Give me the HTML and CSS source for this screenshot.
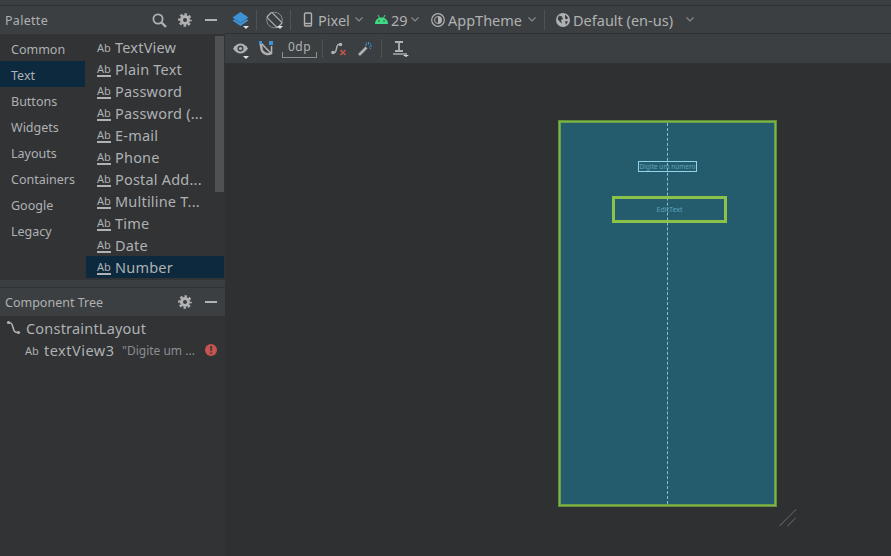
FILE: index.html
```html
<!DOCTYPE html>
<html lang="en">
<head>
    <meta charset="UTF-8">
    <title>Layout Editor</title>
    <link rel="stylesheet" href="styles.css">
</head>
<body>
    <div class="top-strip"></div>
    <div class="editor">
        <aside class="sidebar">
            <div class="panel-header">
                <span class="panel-title palette-title">Palette</span>
                <svg class="hdr-icon search" width="15" height="15" viewBox="0 0 15 15"><circle cx="6" cy="6" r="4.6" fill="none" stroke="#afb1b3" stroke-width="1.8"/><path d="M9.500 9.500l4.500 4.500" stroke="#afb1b3" stroke-width="2.400"/></svg>
                <svg class="hdr-icon" width="14" height="14" viewBox="0 0 14 14"><circle cx="7" cy="7" r="3.500" fill="none" stroke="#afb1b3" stroke-width="3"/><circle cx="7" cy="7" r="5.700" fill="none" stroke="#afb1b3" stroke-width="2.200" stroke-dasharray="2.500 1.980" stroke-dashoffset="1.250"/></svg>
                <span class="hdr-dash"></span>
            </div>
            <div class="palette">
                <ul class="categories">
                    <li>Common</li>
                    <li class="selected">Text</li>
                    <li>Buttons</li>
                    <li>Widgets</li>
                    <li>Layouts</li>
                    <li>Containers</li>
                    <li>Google</li>
                    <li>Legacy</li>
                </ul>
                <ul class="widgets">
                    <li><span class="ab">Ab</span>TextView</li>
                    <li><span class="ab line">Ab</span>Plain Text</li>
                    <li><span class="ab line">Ab</span>Password</li>
                    <li><span class="ab line">Ab</span>Password (...</li>
                    <li><span class="ab line">Ab</span>E-mail</li>
                    <li><span class="ab line">Ab</span>Phone</li>
                    <li><span class="ab line">Ab</span>Postal Add...</li>
                    <li><span class="ab line">Ab</span>Multiline T...</li>
                    <li><span class="ab line">Ab</span>Time</li>
                    <li><span class="ab line">Ab</span>Date</li>
                    <li class="selected"><span class="ab line">Ab</span>Number</li>
                </ul>
                <div class="scrollbar"></div>
            </div>
            <div class="panel-gap"></div>
            <div class="panel-header">
                <span class="panel-title">Component Tree</span>
                <svg class="hdr-icon" width="14" height="14" viewBox="0 0 14 14"><circle cx="7" cy="7" r="3.500" fill="none" stroke="#afb1b3" stroke-width="3"/><circle cx="7" cy="7" r="5.700" fill="none" stroke="#afb1b3" stroke-width="2.200" stroke-dasharray="2.500 1.980" stroke-dashoffset="1.250"/></svg>
                <span class="hdr-dash"></span>
            </div>
            <div class="tree">
                <div class="tree-root">
                    <svg width="15" height="15" viewBox="0 0 15 15"><path d="M2.500 2.500c4 0 3.500 2 4.500 5s1 5 5 5" fill="none" stroke="#afb1b3" stroke-width="1.600"/><circle cx="2.500" cy="2.500" r="1.600" fill="#afb1b3"/><circle cx="12.500" cy="12.500" r="1.600" fill="#afb1b3"/></svg>
                    ConstraintLayout
                </div>
                <div class="tree-child">
                    <span class="ab">Ab</span><span class="tree-name">textView3</span>
                    <span class="tree-hint">"Digite um ...</span>
                    <span class="error-dot">!</span>
                </div>
            </div>
        </aside>
        <main class="main">
            <div class="toolbar">
                <svg class="tool" width="17" height="18" viewBox="0 0 17 18"><path d="M8.500 1L16.500 6.500 8.500 12 .5 6.500z" fill="#3d92d6"/><path d="M.5 9.500l2-1.300 6 4 6-4 2 1.300-8 5.500z" fill="#3d92d6"/></svg>
                <span class="caret"></span>
                <span class="sep"></span>
                <svg class="tool" width="17" height="18" viewBox="0 0 17 18"><circle cx="8.500" cy="9" r="7.800" fill="none" stroke="#87898b" stroke-width="1"/><rect x="5" y="1.500" width="7" height="15" rx="1" transform="rotate(-45 8.500 9)" fill="#3c3f41" stroke="#afb1b3" stroke-width="1.200"/></svg>
                <span class="caret"></span>
                <span class="sep phone-sep"></span>
                <svg class="tool" width="10" height="15" viewBox="0 0 10 15"><rect x="1.500" y="1" width="7" height="13" rx="1.200" fill="none" stroke="#afb1b3" stroke-width="1.400"/><path d="M1.500 11.500h7" stroke="#afb1b3" stroke-width="1.400"/></svg>
                <span class="tool-text pixel">Pixel</span>
                <svg class="chev" width="8" height="5" viewBox="0 0 8 5"><path d="M.5.500L4 4 7.500.500" fill="none" stroke="#87898b" stroke-width="1.200"/></svg>
                <svg class="tool android" width="13" height="9" viewBox="0 0 13 9"><path d="M0 9c0-4 3-6.500 6.500-6.500S13 5 13 9z" fill="#3ddc84"/><path d="M3 0l1.500 3M10 0L8.500 3" stroke="#3ddc84"/><circle cx="4" cy="6" r=".8" fill="#3c3f41"/><circle cx="9" cy="6" r=".8" fill="#3c3f41"/></svg>
                <span class="tool-text api">29</span>
                <svg class="chev api-chev" width="8" height="5" viewBox="0 0 8 5"><path d="M.5.500L4 4 7.500.500" fill="none" stroke="#87898b" stroke-width="1.200"/></svg>
                <svg class="tool theme" width="14" height="14" viewBox="0 0 14 14"><circle cx="7" cy="7" r="6.300" fill="none" stroke="#afb1b3" stroke-width="1.200"/><path d="M7 3a4 4 0 0 1 0 8z" fill="#afb1b3"/><path d="M7 3.500a3.500 3.500 0 0 0 0 7" fill="none" stroke="#afb1b3"/></svg>
                <span class="tool-text app-theme">AppTheme</span>
                <svg class="chev theme-chev" width="8" height="5" viewBox="0 0 8 5"><path d="M.5.500L4 4 7.500.500" fill="none" stroke="#87898b" stroke-width="1.200"/></svg>
                <span class="sep locale-sep"></span>
                <svg class="tool" width="14" height="14" viewBox="0 0 14 14"><circle cx="7" cy="7" r="7" fill="#afb1b3"/><path d="M3 2.500l3 1 1 2.500-2 1 1 3.500-2-1.500L1.500 6zM9 1.500l3 3-1 2-2-1zM9 8l3 .5-2 3.500z" fill="#3c3f41"/></svg>
                <span class="tool-text locale">Default (en-us)</span>
                <svg class="chev locale-chev" width="8" height="5" viewBox="0 0 8 5"><path d="M.5.500L4 4 7.500.500" fill="none" stroke="#87898b" stroke-width="1.200"/></svg>
            </div>
            <div class="toolbar second">
                <svg class="tool" width="15" height="11" viewBox="0 0 15 11"><path d="M0 5.500C2 2 5 .5 7.500.5S13 2 15 5.500C13 9 10 10.500 7.500 10.500S2 9 0 5.500z" fill="#afb1b3"/><circle cx="7.500" cy="5.500" r="3" fill="#3c3f41"/><circle cx="7.500" cy="5.500" r="1.600" fill="#afb1b3"/></svg>
                <span class="caret eye-caret"></span>
                <svg class="tool" width="14" height="15" viewBox="0 0 14 15"><path d="M1.500 2l1.200 6.500c1 4 6 6 9.800 3.500" fill="none" stroke="#afb1b3" stroke-width="2.400"/><path d="M2 2l10.500 11M12.500 5v8" stroke="#afb1b3" stroke-width="1.600"/><rect x="0" y="0" width="3" height="3" fill="#3d92d6"/><rect x="10" y="0" width="4" height="4" fill="#3d92d6"/></svg>
                <div class="margin-box"><span class="margin-value">0dp</span></div>
                <span class="sep short"></span>
                <svg class="tool" width="16" height="15" viewBox="0 0 16 15"><path d="M2 11.500h1.500c2.500 0 1.500-8 4-8H9" fill="none" stroke="#afb1b3" stroke-width="1.400"/><circle cx="2" cy="11.500" r="1.800" fill="#afb1b3"/><circle cx="9.500" cy="3.500" r="1.800" fill="#afb1b3"/><path d="M9.500 9l5 5M14.500 9l-5 5" stroke="#c75450" stroke-width="1.600"/></svg>
                <svg class="tool wand" width="14" height="14" viewBox="0 0 14 14"><path d="M1 13l7.500-7.500" stroke="#afb1b3" stroke-width="2.600"/><path d="M10.500 0v2.500M14 4h-2.500M7 3h2M13 1l-1.200 1.200M8 .5l1 1.500M13 7l-1.500-1.500" stroke="#3d92d6" stroke-width="1"/></svg>
                <span class="sep short wand-sep"></span>
                <svg class="tool" width="16" height="17" viewBox="0 0 16 17"><path d="M2 2h8M6 2v9M2 11h8" fill="none" stroke="#afb1b3" stroke-width="1.800"/><path d="M0 14h14" stroke="#afb1b3" stroke-width="1.400"/><path d="M10 15h6l-3 2z" fill="#d8d8d8"/></svg>
            </div>
            <div class="canvas">
                <div class="device">
                    <div class="guideline"></div>
                    <div class="text-view">Digite um número</div>
                    <div class="edit-text">EditText</div>
                </div>
                <svg class="resize" width="18" height="18" viewBox="0 0 18 18"><path d="M.5 17L17 .5M8.500 17L17 8.500" stroke="#8d8f91" stroke-width="1" stroke-dasharray="1 .5"/></svg>
            </div>
        </main>
    </div>
</body>
</html>
```

FILE: styles.css
```css
* {
    box-sizing: border-box;
}
body {
    margin: 0;
    height: 556px;
    overflow: hidden;
    display: flex;
    flex-direction: column;
    background: #2f3031;
    color: #afb1b3;
    font-family: "Noto Sans", sans-serif;
    font-size: 13px;
}
ul {
    list-style: none;
    margin: 0;
    padding: 0;
}
.top-strip {
    height: 6px;
    background: #3c3f41;
    border-bottom: 1px solid #2f3133;
}
.editor {
    flex: 1;
    display: flex;
    min-height: 0;
}
.sidebar {
    width: 225px;
    background: #313335;
    display: flex;
    flex-direction: column;
}

/* panel headers */
.panel-header {
    height: 28px;
    padding: 0 8px 0 5px;
    display: flex;
    align-items: center;
    background: #3c3f41;
}
.panel-title {
    flex: 1;
    font-size: 12.500px;
}
.palette-title {
    letter-spacing: .3px;
}
.hdr-icon {
    margin-right: 13px;
}
.hdr-icon.search {
    margin-right: 11px;
}
.hdr-dash {
    width: 12px;
    height: 2px;
    background: #afb1b3;
}

/* palette */
.palette {
    height: 246px;
    display: flex;
    position: relative;
}
.categories {
    width: 85px;
    padding-top: 1px;
}
.categories li {
    height: 26px;
    line-height: 30px;
    padding-left: 11px;
    font-size: 12.500px;
}
.selected {
    background: #0d293e;
}
.widgets {
    width: 138px;
    margin-left: 1px;
    padding-top: 2px;
}
.widgets li {
    height: 22px;
    display: flex;
    align-items: center;
    font-size: 14.500px;
    letter-spacing: .2px;
    white-space: nowrap;
}
.ab {
    width: 29px;
    padding-left: 11px;
    flex: none;
    font-size: 11px;
    letter-spacing: 0;
}
.ab.line {
    position: relative;
    line-height: 12px;
}
.ab.line::after {
    content: "";
    position: absolute;
    left: 11px;
    right: 4px;
    bottom: -2px;
    height: 2px;
    background: #afb1b3;
}
.scrollbar {
    position: absolute;
    left: 215px;
    top: 2px;
    width: 9px;
    height: 156px;
    background: #4f5254;
}
.panel-gap {
    height: 8px;
    background: #3c3f41;
    border-bottom: 1px solid #2f3133;
}

/* component tree */
.tree {
    flex: 1;
}
.tree-root {
    height: 23px;
    display: flex;
    align-items: center;
    gap: 5px;
    padding-left: 6px;
    font-size: 14.500px;
    letter-spacing: .2px;
}
.tree-child {
    height: 22px;
    display: flex;
    align-items: center;
    font-size: 14.500px;
    letter-spacing: .5px;
}
.tree-child .ab {
    width: 44px;
    padding-left: 25px;
}
.tree-name {
    width: 78px;
}
.tree-hint {
    width: 83px;
    font-size: 12px;
    letter-spacing: 0;
    color: #8c8e90;
}
.error-dot {
    width: 12px;
    height: 12px;
    border-radius: 50%;
    background: #c75450;
    color: #313335;
    font-size: 10px;
    font-weight: 700;
    line-height: 12px;
    text-align: center;
    letter-spacing: 0;
}

/* toolbars */
.main {
    flex: 1;
    display: flex;
    flex-direction: column;
    min-width: 0;
}
.toolbar {
    height: 28px;
    display: flex;
    align-items: center;
    padding-left: 7px;
    background: #3c3f41;
    border-bottom: 1px solid #2f3133;
}
.toolbar.second {
    height: 30px;
    padding-left: 8px;
}
.tool {
    flex: none;
}
.caret {
    width: 6px;
    height: 3px;
    background: #e0e0e0;
    clip-path: polygon(0 0, 100% 0, 50% 100%);
    align-self: flex-end;
    margin: 0 0 4px -6px;
}
.eye-caret {
    margin: 0 10px 4px -5px;
}
.sep {
    width: 1px;
    height: 20px;
    background: #505254;
    margin: 0 9px 0 7px;
}
.phone-sep {
    margin-right: 12px;
}
.locale-sep {
    margin: 0 11px 0 8px;
}
.sep.short {
    height: 19px;
    margin: 0 8px 0 5px;
}
.sep.wand-sep {
    margin: 0 11px 0 9px;
}
.tool-text {
    font-size: 14.500px;
    margin-left: 5px;
    white-space: nowrap;
}
.pixel {
    width: 32px;
}
.api {
    width: 17px;
    margin-left: 3px;
}
.app-theme {
    width: 74px;
    margin-left: 3px;
}
.locale {
    width: 100px;
    margin-left: 3px;
}
.chev {
    margin-left: 5px;
}
.api-chev {
    margin-left: 3px;
}
.theme-chev {
    margin-left: 6px;
}
.locale-chev {
    margin-left: 13px;
}
.android {
    margin-left: 12px;
}
.theme {
    margin-left: 12px;
}
.margin-box {
    width: 35px;
    height: 6px;
    align-self: flex-end;
    margin: 0 0 5px 9px;
    border: 1px solid #8d8f91;
    border-top: 0;
    text-align: center;
}
.margin-value {
    display: block;
    margin-top: -12px;
    font-size: 12px;
    line-height: 14px;
    letter-spacing: .5px;
}
.wand {
    margin-left: 11px;
}

/* design surface */
.canvas {
    flex: 1;
    position: relative;
    padding: 56px 0 0 333px;
}
.device {
    width: 219px;
    height: 387px;
    position: relative;
    background: #245c6e;
    border: 1px solid #5f8f3c;
    box-shadow: inset 0 0 0 1px #7fb544, inset 0 0 0 2px #6a9c46;
}
.guideline {
    position: absolute;
    left: 108px;
    top: 2px;
    bottom: 2px;
    border-left: 1px dashed #7fc4d8;
}
.text-view {
    position: absolute;
    left: 79px;
    top: 40px;
    width: 59px;
    height: 11px;
    border: 1px solid #8fd4e8;
    color: #5ea3b7;
    font-size: 6.500px;
    line-height: 9px;
    text-align: center;
    white-space: nowrap;
}
.edit-text {
    position: absolute;
    left: 53px;
    top: 75px;
    width: 115px;
    height: 27px;
    border: 3px solid #8bc34a;
    color: #5ea3b7;
    font-size: 7px;
    line-height: 21px;
    text-align: center;
}
.resize {
    position: absolute;
    left: 554px;
    top: 445px;
}
```
